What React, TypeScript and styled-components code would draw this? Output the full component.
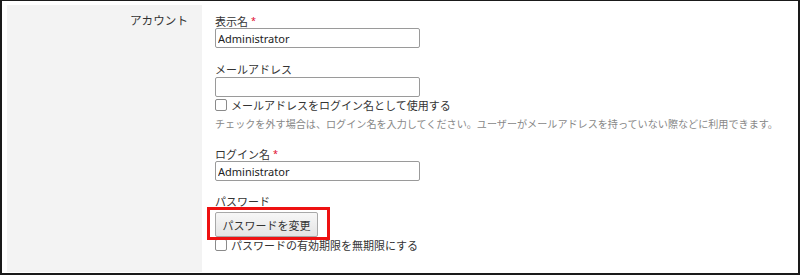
import React from "react";
import styled, { createGlobalStyle } from "styled-components";

const GlobalStyle = createGlobalStyle`
	html, body {
		margin: 0;
		padding: 0;
		background: #ffffff;
	}
	body {
		font-family: "Noto Sans", "Noto Sans CJK JP", sans-serif;
		color: #333333;
	}
`;

const Frame = styled.div`
	width: 800px;
	height: 275px;
	box-sizing: border-box;
	border-style: solid;
	border-color: #1a1a1a;
	border-width: 1px 2px 2px 2px;
	padding: 4px 5px 1px 5px;
	background: #ffffff;
	display: grid;
	grid-template-columns: 195px 1fr;
`;

const SideLabel = styled.div`
	background: #f3f3f3;
	text-align: right;
	padding: 9px 14px 0 0;
	font-size: 11.6px;
	line-height: 14px;
	color: #333333;
`;

const Fields = styled.div`
	padding: 9px 0 0 13px;
	display: flex;
	flex-direction: column;
`;

const Field = styled.div<{ $gap?: number }>`
	display: flex;
	flex-direction: column;
	align-items: flex-start;
	margin-bottom: ${(p) => p.$gap ?? 0}px;
`;

const Label = styled.div`
	font-size: 11px;
	line-height: 14px;
	height: 14px;
	color: #333333;
`;

const Required = styled.span`
	color: #e0002a;
	font-size: 9px;
	margin-left: 3px;
	vertical-align: 2px;
`;

const TextInput = styled.input`
	box-sizing: border-box;
	width: 205px;
	height: 20px;
	margin: 0;
	padding: 0 2px;
	border: 1px solid #9a9a9a;
	border-radius: 2px;
	font-family: "Noto Sans", "Noto Sans CJK JP", sans-serif;
	font-size: 11px;
	color: #222222;
	background: #ffffff;
	outline: none;
`;

const CheckRow = styled.label<{ $height?: number }>`
	display: flex;
	align-items: center;
	gap: 4px;
	height: ${(p) => p.$height ?? 15}px;
	font-size: 11px;
	color: #333333;
`;

const Box = styled.input`
	appearance: none;
	box-sizing: border-box;
	width: 12px;
	height: 12px;
	margin: 0;
	border: 1px solid #8a8a8a;
	border-radius: 2px;
	background: #ffffff;
`;

const Help = styled.div`
	margin-top: 4px;
	font-size: 10.1px;
	line-height: 16px;
	color: #888888;
	white-space: nowrap;
`;

const Marked = styled.div`
	position: relative;
	margin-top: 3px;
`;

const Highlight = styled.div`
	position: absolute;
	top: -5px;
	left: -8px;
	right: -12px;
	bottom: -3px;
	border: 3px solid #ee1111;
	pointer-events: none;
`;

const Button = styled.button`
	box-sizing: border-box;
	height: 25px;
	width: 103px;
	margin: 0;
	padding: 0;
	border: 1px solid #a8a8a8;
	border-radius: 2px;
	background: linear-gradient(#f7f7f7, #e4e4e4);
	font-family: "Noto Sans", "Noto Sans CJK JP", sans-serif;
	font-size: 11px;
	color: #333333;
`;

const App = () => {
	return (
		<>
			<GlobalStyle />
			<Frame>
				<SideLabel>アカウント</SideLabel>
				<Fields>
					<Field $gap={15}>
						<Label>
							表示名<Required>*</Required>
						</Label>
						<TextInput defaultValue="Administrator" />
					</Field>
					<Field $gap={15}>
						<Label>メールアドレス</Label>
						<TextInput defaultValue="" />
						<CheckRow>
							<Box type="checkbox" />
							メールアドレスをログイン名として使用する
						</CheckRow>
						<Help>
							チェックを外す場合は、ログイン名を入力してください。ユーザーがメールアドレスを持っていない際などに利用できます。
						</Help>
					</Field>
					<Field $gap={14}>
						<Label>
							ログイン名<Required>*</Required>
						</Label>
						<TextInput defaultValue="Administrator" />
					</Field>
					<Field>
						<Label>パスワード</Label>
						<Marked>
							<Button>パスワードを変更</Button>
							<Highlight />
						</Marked>
						<CheckRow>
							<Box type="checkbox" />
							パスワードの有効期限を無期限にする
						</CheckRow>
					</Field>
				</Fields>
			</Frame>
		</>
	);
};

export default App;
